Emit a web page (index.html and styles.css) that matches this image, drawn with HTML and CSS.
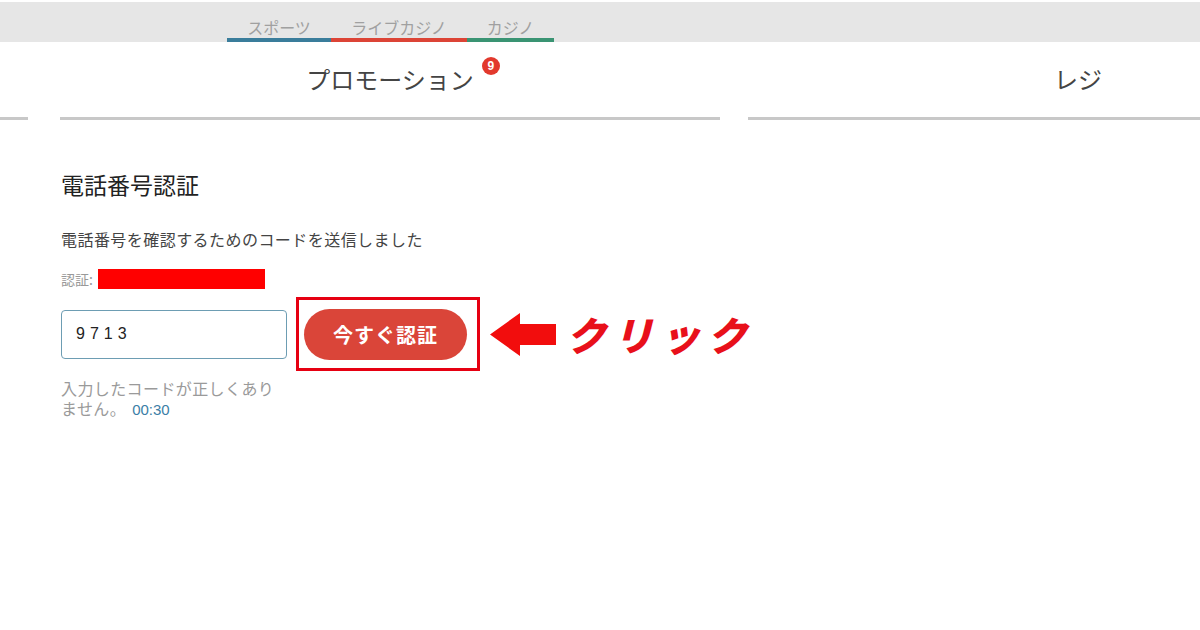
FILE: index.html
```html
<!DOCTYPE html>
<html lang="ja">
<head>
  <meta charset="UTF-8" />
  <meta name="viewport" content="width=device-width, initial-scale=1.0"/>
  <title>電話番号認証</title>
  <link rel="stylesheet" href="styles.css">
</head>
<body>
  <div class="topbar">
    <nav class="tabs">
      <a class="tab tab-sports">スポーツ</a>
      <a class="tab tab-live">ライブカジノ</a>
      <a class="tab tab-casino">カジノ</a>
    </nav>
  </div>

  <div class="menu">
    <div class="menu-stub"></div>
    <div class="menu-item">
      <span class="menu-label">プロモーション<span class="badge">9</span></span>
    </div>
    <div class="menu-item">
      <span class="menu-label">レジ</span>
    </div>
  </div>

  <div class="content">
    <h2 class="title">電話番号認証</h2>
    <p class="desc">電話番号を確認するためのコードを送信しました</p>
    <div class="phone">認証: <span class="masked"></span></div>

    <div class="verify-row">
      <input class="code-input" type="text" value="9713" />
      <div class="highlight">
        <button class="verify-btn">今すぐ認証</button>
      </div>
      <svg class="arrow" width="66" height="43" viewBox="0 0 66 43">
        <polygon points="0,21.5 30,0 30,11 66,11 66,32 30,32 30,43" fill="#f20d0d"/>
      </svg>
      <span class="click-note">クリック</span>
    </div>

    <div class="error">
      <div class="error-line">入力したコードが正しくあり</div>
      <div class="error-line">ません。<span class="timer">00:30</span></div>
    </div>
  </div>
</body>
</html>
```

FILE: styles.css
```css
body {
  margin: 0;
  font-family: "Noto Sans CJK JP", "Noto Sans", sans-serif;
  background: #fff;
  color: #333;
  overflow: hidden;
}

.topbar {
  margin-top: 2px;
  height: 40px;
  background: #e6e6e6;
  padding-left: 227px;
  display: flex;
  align-items: flex-end;
}

.tabs {
  display: flex;
}

.tab {
  font-size: 16px;
  line-height: 20px;
  color: #a0a0a0;
  text-align: center;
  border-bottom: 4px solid;
  padding-bottom: 1px;
}

.tab-sports {
  width: 104px;
  border-color: #3a7d9b;
}

.tab-live {
  width: 136px;
  border-color: #dc4436;
}

.tab-casino {
  width: 87px;
  border-color: #3a9473;
}

.menu {
  display: flex;
  height: 78px;
}

.menu-stub {
  width: 28px;
  flex-shrink: 0;
  margin-right: 32px;
  border-bottom: 3px solid #c8c8c8;
}

.menu-item {
  width: 660px;
  flex-shrink: 0;
  margin-right: 28px;
  border-bottom: 3px solid #c8c8c8;
  display: flex;
  align-items: center;
  justify-content: center;
}

.menu-label {
  position: relative;
  font-size: 24px;
  line-height: 30px;
  color: #444;
  padding-bottom: 2px;
}

.badge {
  position: absolute;
  right: -26px;
  top: -7px;
  width: 18px;
  height: 18px;
  border-radius: 50%;
  background: #e2392d;
  color: #fff;
  font-family: "Liberation Sans", sans-serif;
  font-size: 12px;
  font-weight: bold;
  line-height: 18px;
  text-align: center;
}

.content {
  padding: 48px 0 0 61px;
}

.title {
  margin: 0;
  font-size: 23px;
  font-weight: normal;
  line-height: 32px;
  color: #222;
}

.desc {
  margin: 28px 0 0;
  font-size: 16px;
  line-height: 22px;
  letter-spacing: 0.45px;
  color: #444;
}

.phone {
  margin-top: 19px;
  font-size: 14px;
  line-height: 20px;
  color: #999;
  display: flex;
  align-items: center;
}

.masked {
  display: inline-block;
  width: 167px;
  height: 20px;
  background: #ff0000;
  margin-left: 5px;
}

.verify-row {
  margin-top: 8px;
  display: flex;
  align-items: center;
}

.code-input {
  box-sizing: border-box;
  width: 226px;
  height: 49px;
  border: 1.5px solid #6d9db3;
  border-radius: 4px;
  padding: 0 0 0 14px;
  font-family: "Liberation Sans", sans-serif;
  font-size: 16px;
  letter-spacing: 5px;
  color: #222;
  outline: none;
}

.highlight {
  margin-left: 9px;
  border: 3px solid #e60012;
  padding: 9px 10px 8px 5px;
}

.verify-btn {
  width: 163px;
  height: 51px;
  border: none;
  border-radius: 26px;
  background: #da4539;
  color: #fff;
  font-family: "Noto Sans CJK JP", sans-serif;
  font-size: 20px;
  font-weight: bold;
  letter-spacing: 1px;
  cursor: pointer;
  display: block;
}

.arrow {
  margin-left: 10px;
  display: block;
}

.click-note {
  margin-left: 10px;
  font-size: 40px;
  font-weight: 900;
  font-style: italic;
  letter-spacing: 7px;
  color: #e8101a;
  line-height: 44px;
}

.error {
  margin-top: 7px;
  font-size: 16px;
  letter-spacing: 0.4px;
  color: #9a9a9a;
}

.error-line {
  height: 20px;
  line-height: 20px;
}

.timer {
  color: #3b7ea6;
  font-family: "Liberation Sans", sans-serif;
  font-size: 15px;
  letter-spacing: 0;
  margin-left: 6px;
}
```
